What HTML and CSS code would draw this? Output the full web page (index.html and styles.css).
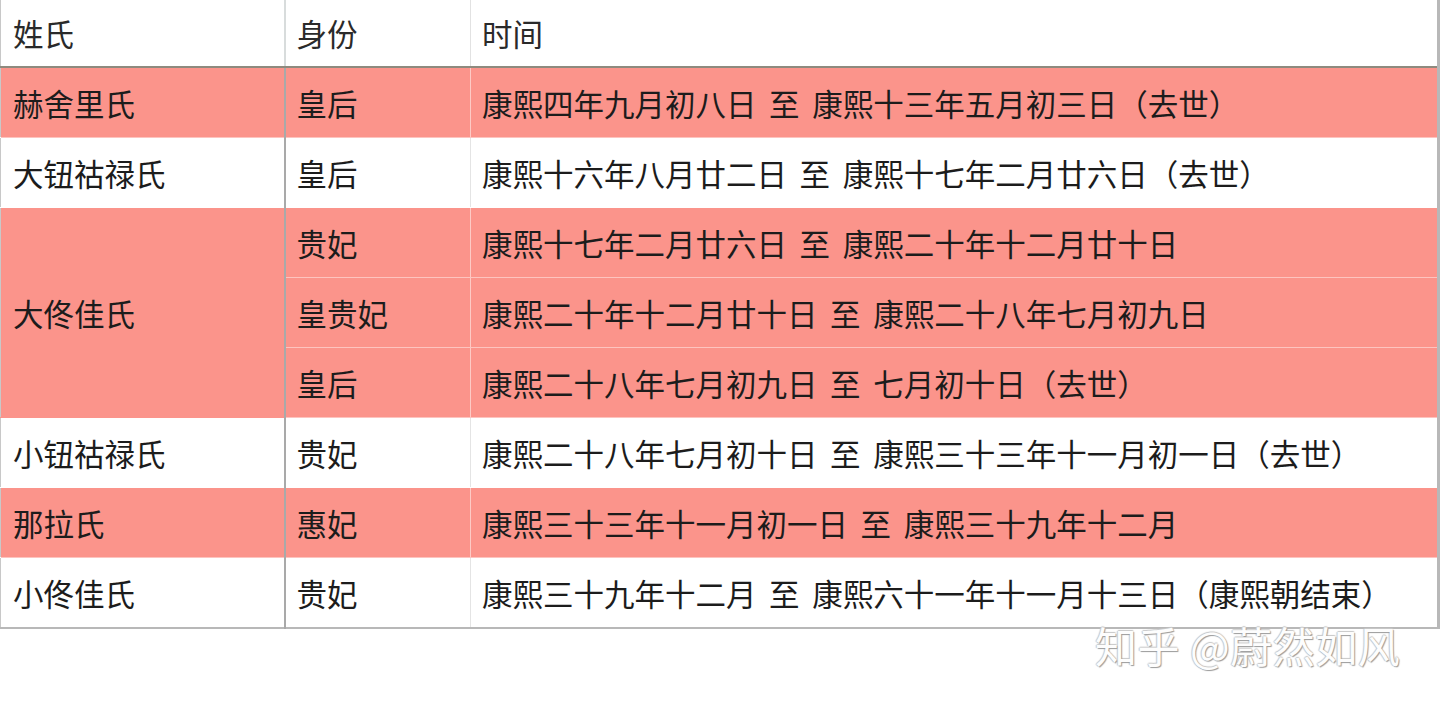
FILE: index.html
```html
<!DOCTYPE html>
<html lang="zh">
<head>
<meta charset="utf-8">
<link rel="stylesheet" href="styles.css">
</head>
<body>
<div class="page">
<table class="tbl">
  <colgroup><col class="c1"><col class="c2"><col class="c3"></colgroup>
  <thead>
    <tr><th class="n">姓氏</th><th class="r">身份</th><th class="t">时间</th></tr>
  </thead>
  <tbody>
    <tr class="pink"><td class="n">赫舍里氏</td><td class="r">皇后</td><td class="t">康熙四年九月初八日 至 康熙十三年五月初三日（去世）</td></tr>
    <tr><td class="n">大钮祜禄氏</td><td class="r">皇后</td><td class="t">康熙十六年八月廿二日 至 康熙十七年二月廿六日（去世）</td></tr>
    <tr class="pink"><td class="n span" rowspan="3">大佟佳氏</td><td class="r">贵妃</td><td class="t">康熙十七年二月廿六日 至 康熙二十年十二月廿十日</td></tr>
    <tr class="pink"><td class="r">皇贵妃</td><td class="t">康熙二十年十二月廿十日 至 康熙二十八年七月初九日</td></tr>
    <tr class="pink"><td class="r">皇后</td><td class="t">康熙二十八年七月初九日 至 七月初十日（去世）</td></tr>
    <tr><td class="n">小钮祜禄氏</td><td class="r">贵妃</td><td class="t">康熙二十八年七月初十日 至 康熙三十三年十一月初一日（去世）</td></tr>
    <tr class="pink"><td class="n">那拉氏</td><td class="r">惠妃</td><td class="t">康熙三十三年十一月初一日 至 康熙三十九年十二月</td></tr>
    <tr><td class="n">小佟佳氏</td><td class="r">贵妃</td><td class="t">康熙三十九年十二月 至 康熙六十一年十一月十三日（康熙朝结束）</td></tr>
  </tbody>
</table>
<div class="mark">知乎 @蔚然如风</div>
</div>
</body>
</html>
```
FILE: styles.css
```css
html, body { margin: 0; padding: 0; background: #fff; }
.page { position: relative; width: 1440px; height: 705px; overflow: hidden; }
.tbl {
  width: 1440px;
  border-collapse: collapse;
  table-layout: fixed;
  font-family: "Liberation Serif", "Noto Sans CJK SC", serif;
  font-size: 30.5px;
  word-spacing: 5px;
  color: #1c1c1c;
  border-left: 1px solid #c8c8c8;
  border-right: 3px solid #b8b8b8;
  border-bottom: 2px solid #b8b8b8;
}
.c1 { width: 284px; }
.c2 { width: 186px; }
th, td {
  text-align: left;
  font-weight: normal;
  white-space: nowrap;
  vertical-align: middle;
}
th { height: 66px; border-bottom: 2px solid #8e8a7e; color: #2a2a2a; }
td { height: 69px; border-bottom: 1px solid rgba(255,255,255,0.45); }
.n { padding: 0 0 0 12px; }
.r { padding: 0 0 0 11px; }
.t { padding: 0 0 0 11px; }
th.r { border-left: 2px solid #d8dcdc; }
th.t { border-left: 1px solid #e2e2e2; }
td.r { border-left: 2px solid #a9a9a9; }
td.t { border-left: 1px solid #e4e4e4; }
.pink td.t { border-left: 1px solid rgba(255,255,255,0.5); }
.pink td { background: #fb948b; }
.pink td.span { border-bottom-color: #fb948b; }
.mark {
  position: absolute;
  left: 1095px;
  top: 622px;
  font-family: "Noto Sans CJK SC", sans-serif;
  font-size: 42px;
  line-height: 46px;
  letter-spacing: 0.5px;
  color: #fdfdfd;
  text-shadow: 1px 1px 1px #9a9a9a, -1px 0 1px #c8c8c8, 0 -1px 1px #c8c8c8;
  white-space: nowrap;
}
```
